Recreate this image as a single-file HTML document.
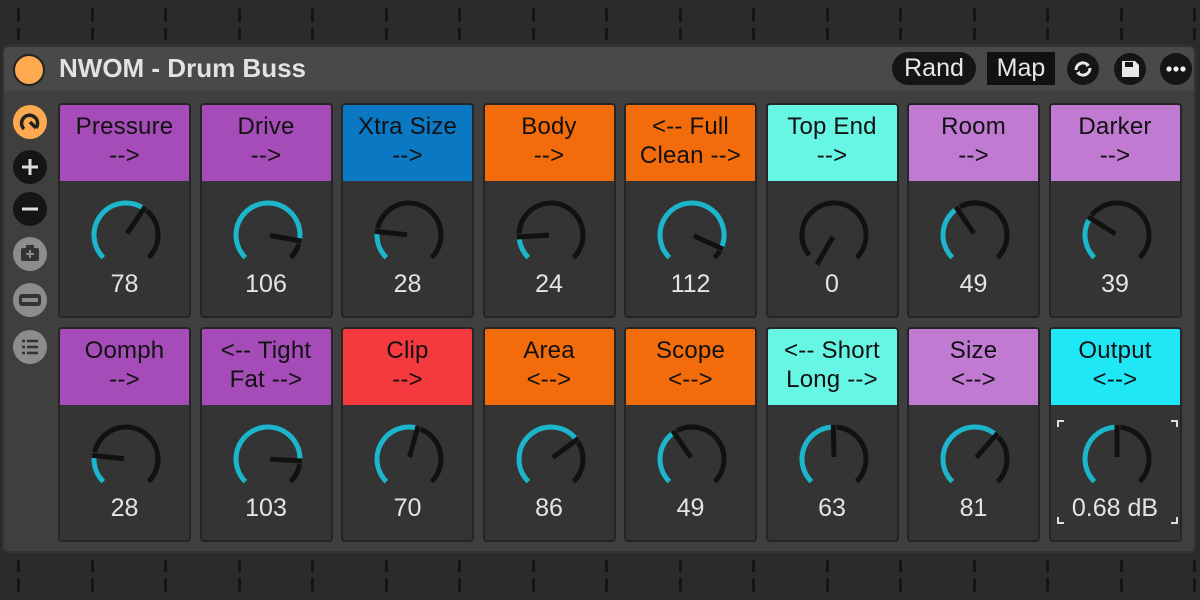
<!DOCTYPE html>
<html><head><meta charset="utf-8"><style>
*{margin:0;padding:0;box-sizing:border-box}
body{width:1200px;height:600px;background:#2b2b2b;font-family:"Liberation Sans",sans-serif;position:relative;overflow:hidden}
.tick{position:absolute;width:3px;background:#151515}
#panel{position:absolute;left:2px;top:45px;width:1194px;height:508px;background:#3f3f3f;border-radius:6px;border:2px solid #333}
#title{position:absolute;left:0;top:0;width:100%;height:44px;background:#494949;border-radius:6px 6px 0 0}
.cell{position:absolute;width:133px;height:215px;background:#343434;border:2px solid #252525;border-radius:4px;overflow:hidden}
.hd{height:76px;text-align:center;color:#111;font-size:24px;line-height:29px;padding-top:7px;letter-spacing:0.2px}
.val{position:absolute;left:0;width:100%;top:165px;text-align:center;color:#e4e4e4;font-size:25px}
.btn{position:absolute;color:#e8e8e8;font-size:25px;text-align:center;background:#151515}
</style></head><body>
<div id="ticks"></div>
<div id="panel">
<div id="title">
<div style="position:absolute;left:9px;top:7px;width:32px;height:32px;border-radius:50%;background:#fca94f;border:2px solid #222"></div>
<div style="position:absolute;left:55px;top:6px;color:#e2e2e2;font-size:26px;font-weight:bold">NWOM - Drum Buss</div>
<div class="btn" style="left:888px;top:5px;width:84px;height:33px;border-radius:17px;line-height:33px">Rand</div>
<div class="btn" style="left:983px;top:5px;width:68px;height:33px;line-height:33px;background:#111">Map</div>
<svg style="position:absolute;left:1062px;top:5px" width="130" height="34">
<circle cx="17" cy="17" r="16" fill="#151515"/>
<path d="M10 18 a7 7 0 0 1 12 -5 M24 16 a7 7 0 0 1 -12 5" stroke="#e8e8e8" stroke-width="3" fill="none"/>
<path d="M20 10 l4 3 l-4 2z M14 24 l-4 -3 l4 -2z" fill="#e8e8e8"/>
<circle cx="64" cy="17" r="16" fill="#151515"/>
<path d="M56 9 h13 l4 4 v12 h-17z" fill="#e8e8e8"/><rect x="59" y="10" width="8" height="5" fill="#151515"/>
<circle cx="110" cy="17" r="16" fill="#151515"/>
<circle cx="103" cy="17" r="2.6" fill="#eee"/><circle cx="110" cy="17" r="2.6" fill="#eee"/><circle cx="117" cy="17" r="2.6" fill="#eee"/>
</svg>
</div>
<svg style="position:absolute;left:6px;top:55px" width="44" height="280">
<circle cx="20" cy="20" r="17" fill="#fca94f"/>
<path d="M14 27 a8 8 0 1 1 12 -1" stroke="#222" stroke-width="3.5" fill="none"/><path d="M20 20 l6 6" stroke="#222" stroke-width="3.5"/>
<circle cx="20" cy="65" r="17" fill="#151515"/><path d="M12 65h16M20 57v16" stroke="#ddd" stroke-width="3"/>
<circle cx="20" cy="107" r="17" fill="#151515"/><path d="M12 107h16" stroke="#ddd" stroke-width="3"/>
<circle cx="20" cy="152" r="17" fill="#8c8c8c"/><rect x="11" y="146" width="18" height="13" rx="2" fill="#333"/><rect x="16" y="143" width="8" height="4" fill="#333"/><path d="M16 152h8M20 148v8" stroke="#8c8c8c" stroke-width="2"/>
<circle cx="20" cy="198" r="17" fill="#8c8c8c"/><rect x="9" y="192" width="22" height="12" rx="3" fill="#333"/><rect x="12" y="196" width="16" height="4" fill="#8c8c8c"/>
<circle cx="20" cy="245" r="17" fill="#8c8c8c"/><path d="M12 239h3M17 239h11M12 245h3M17 245h11M12 251h3M17 251h11" stroke="#333" stroke-width="2.5"/>
</svg>
<div id="cells"></div>
</div>
<script>
var tk=document.getElementById('ticks'),h='';
for(var x=17;x<1200;x+=73.5){h+='<div class="tick" style="left:'+x+'px;top:8px;height:14px"></div><div class="tick" style="left:'+x+'px;top:28px;height:12px"></div><div class="tick" style="left:'+x+'px;top:560px;height:12px"></div><div class="tick" style="left:'+x+'px;top:578px;height:14px"></div>';}
tk.innerHTML=h;
var cells=[
["Pressure<br>-->","#a54cb8",78,"78"],["Drive<br>-->","#a54cb8",106,"106"],["Xtra Size<br>-->","#0a78c2",28,"28"],["Body<br>-->","#f36c0c",24,"24"],["&lt;-- Full<br>Clean -->","#f36c0c",112,"112"],["Top End<br>-->","#67f6e4",0,"0"],["Room<br>-->","#c07ad2",49,"49"],["Darker<br>-->","#c07ad2",39,"39"],
["Oomph<br>-->","#a54cb8",28,"28"],["&lt;-- Tight<br>Fat -->","#a54cb8",103,"103"],["Clip<br>-->","#f4393f",70,"70"],["Area<br>&lt;-->","#f36c0c",86,"86"],["Scope<br>&lt;-->","#f36c0c",49,"49"],["&lt;-- Short<br>Long -->","#67f6e4",63,"63"],["Size<br>&lt;-->","#c07ad2",81,"81"],["Output<br>&lt;-->","#1fe7f6",63.5,"0.68 dB"]];
var out='';
function pt(a,r,cx,cy){var t=(a-90)*Math.PI/180;return [cx+r*Math.cos(t),cy+r*Math.sin(t)];}
function arc(a1,a2,r,cx,cy){if(a2-a1<0.5)return '';var p=pt(a1,r,cx,cy),q=pt(a2,r,cx,cy);return 'M'+p[0].toFixed(2)+' '+p[1].toFixed(2)+' A'+r+' '+r+' 0 '+((a2-a1)>180?1:0)+' 1 '+q[0].toFixed(2)+' '+q[1].toFixed(2);}
for(var i=0;i<16;i++){var c=cells[i],col=i%8,row=(i/8)|0;
var L=56+col*141.5-2,T=(row?280:56);
var a=-150+300*c[2]/127,cx=66,cy=130,r=32;
var s='<svg style="position:absolute;left:0;top:0" width="133" height="215">';
var ac=Math.max(-135,Math.min(135,a));
s+='<path d="'+arc(-135,Math.min(ac-4,135),r,cx,cy)+'" stroke="#1bb5cc" stroke-width="5" fill="none"/>';
s+='<path d="'+arc(Math.max(ac+6,-135),135,r,cx,cy)+'" stroke="#111" stroke-width="5" fill="none"/>';
var p1=pt(a,2,cx,cy),p2=pt(a,r+2,cx,cy);
s+='<line x1="'+p1[0]+'" y1="'+p1[1]+'" x2="'+p2[0]+'" y2="'+p2[1]+'" stroke="#111" stroke-width="5"/>';
if(i==15)s+='<path d="M7 98v-6h6M126 98v-6h-6M7 188v6h6M126 188v6h-6" stroke="#ddd" stroke-width="2" fill="none"/>';
s+='</svg>';
out+='<div class="cell" style="left:'+L+'px;top:'+T+'px"><div class="hd" style="background:'+c[1]+'">'+c[0]+'</div>'+s+'<div class="val">'+c[3]+'</div></div>';}
document.getElementById('cells').innerHTML=out;
</script>
</body></html>
